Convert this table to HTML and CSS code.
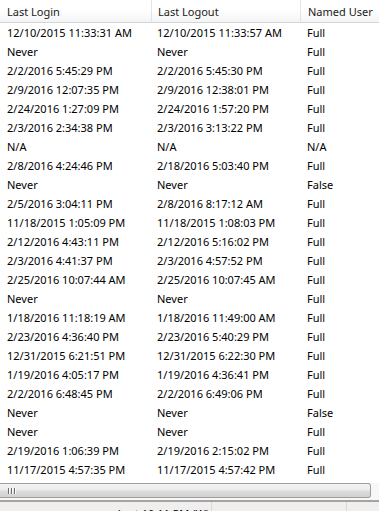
FILE: index.html
```html
<!DOCTYPE html>
<html>
<head>
<meta charset="utf-8">
<link rel="stylesheet" href="styles.css">
</head>
<body>
<div class="view">
  <div class="header">
    <div class="hcell c1">Last Login</div>
    <div class="hcell c2">Last Logout</div>
    <div class="hcell c3">Named User</div>
  </div>
  <div class="rows">
    <div class="row"><span class="c1">12/10/2015 11:33:31 AM</span><span class="c2">12/10/2015 11:33:57 AM</span><span class="c3">Full</span></div>
    <div class="row"><span class="c1">Never</span><span class="c2">Never</span><span class="c3">Full</span></div>
    <div class="row"><span class="c1">2/2/2016 5:45:29 PM</span><span class="c2">2/2/2016 5:45:30 PM</span><span class="c3">Full</span></div>
    <div class="row"><span class="c1">2/9/2016 12:07:35 PM</span><span class="c2">2/9/2016 12:38:01 PM</span><span class="c3">Full</span></div>
    <div class="row"><span class="c1">2/24/2016 1:27:09 PM</span><span class="c2">2/24/2016 1:57:20 PM</span><span class="c3">Full</span></div>
    <div class="row"><span class="c1">2/3/2016 2:34:38 PM</span><span class="c2">2/3/2016 3:13:22 PM</span><span class="c3">Full</span></div>
    <div class="row"><span class="c1">N/A</span><span class="c2">N/A</span><span class="c3">N/A</span></div>
    <div class="row"><span class="c1">2/8/2016 4:24:46 PM</span><span class="c2">2/18/2016 5:03:40 PM</span><span class="c3">Full</span></div>
    <div class="row"><span class="c1">Never</span><span class="c2">Never</span><span class="c3">False</span></div>
    <div class="row"><span class="c1">2/5/2016 3:04:11 PM</span><span class="c2">2/8/2016 8:17:12 AM</span><span class="c3">Full</span></div>
    <div class="row"><span class="c1">11/18/2015 1:05:09 PM</span><span class="c2">11/18/2015 1:08:03 PM</span><span class="c3">Full</span></div>
    <div class="row"><span class="c1">2/12/2016 4:43:11 PM</span><span class="c2">2/12/2016 5:16:02 PM</span><span class="c3">Full</span></div>
    <div class="row"><span class="c1">2/3/2016 4:41:37 PM</span><span class="c2">2/3/2016 4:57:52 PM</span><span class="c3">Full</span></div>
    <div class="row"><span class="c1">2/25/2016 10:07:44 AM</span><span class="c2">2/25/2016 10:07:45 AM</span><span class="c3">Full</span></div>
    <div class="row"><span class="c1">Never</span><span class="c2">Never</span><span class="c3">Full</span></div>
    <div class="row"><span class="c1">1/18/2016 11:18:19 AM</span><span class="c2">1/18/2016 11:49:00 AM</span><span class="c3">Full</span></div>
    <div class="row"><span class="c1">2/23/2016 4:36:40 PM</span><span class="c2">2/23/2016 5:40:29 PM</span><span class="c3">Full</span></div>
    <div class="row"><span class="c1">12/31/2015 6:21:51 PM</span><span class="c2">12/31/2015 6:22:30 PM</span><span class="c3">Full</span></div>
    <div class="row"><span class="c1">1/19/2016 4:05:17 PM</span><span class="c2">1/19/2016 4:36:41 PM</span><span class="c3">Full</span></div>
    <div class="row"><span class="c1">2/2/2016 6:48:45 PM</span><span class="c2">2/2/2016 6:49:06 PM</span><span class="c3">Full</span></div>
    <div class="row"><span class="c1">Never</span><span class="c2">Never</span><span class="c3">False</span></div>
    <div class="row"><span class="c1">Never</span><span class="c2">Never</span><span class="c3">Full</span></div>
    <div class="row"><span class="c1">2/19/2016 1:06:39 PM</span><span class="c2">2/19/2016 2:15:02 PM</span><span class="c3">Full</span></div>
    <div class="row"><span class="c1">11/17/2015 4:57:35 PM</span><span class="c2">11/17/2015 4:57:42 PM</span><span class="c3">Full</span></div>
  </div>
  <div class="hscroll">
    <div class="thumb"><span class="grip"></span><span class="grip"></span><span class="grip"></span></div>
  </div>
  <div class="status">
    <div class="scell s1">Last 10:11 PM (W)</div>
    <div class="scell s2"></div>
    <div class="scell s3"></div>
  </div>
</div>
</body>
</html>
```

FILE: styles.css
```css
html, body {
  margin: 0;
  padding: 0;
  background: #ffffff;
  overflow: hidden;
}
.view {
  width: 379px;
  height: 511px;
  display: flex;
  flex-direction: column;
  font-family: "Noto Sans", "Open Sans", sans-serif;
  font-size: 11px;
  color: #000000;
  overflow: hidden;
}
.header {
  display: grid;
  grid-template-columns: 152px 149px 1fr;
  height: 22px;
  border-bottom: 1px solid #d5d5d5;
  background: linear-gradient(to bottom, #ffffff 0%, #ffffff 45%, #f3f4f6 100%);
  color: #1a1a1a;
}
.hcell {
  line-height: 20px;
  padding-top: 2px;
  white-space: nowrap;
  overflow: hidden;
}
.hcell.c1, .hcell.c2 {
  border-right: 1px solid #e2e4e8;
}
.hcell.c1 { padding-left: 7px; }
.hcell.c2 { padding-left: 6px; }
.hcell.c3 { padding-left: 7px; }
.rows {
  display: flex;
  flex-direction: column;
  height: 460px;
}
.row {
  display: grid;
  grid-template-columns: 152px 149px 1fr;
  height: 19px;
  line-height: 19px;
  white-space: nowrap;
}
.row .c1 { padding-left: 7px; }
.row .c2 { padding-left: 5px; }
.row .c3 { padding-left: 6px; }
.hscroll {
  height: 17px;
  display: flex;
  align-items: flex-start;
  padding-right: 8px;
  background: #f7f7f7;
}
.thumb {
  flex: 1;
  height: 13px;
  border: 1px solid #9d9d9d;
  border-left: none;
  border-radius: 0 3px 3px 0;
  background: linear-gradient(to bottom, #f3f3f3 0%, #ececec 45%, #dcdcdc 55%, #d2d2d2 100%);
  display: flex;
  align-items: center;
  gap: 1px;
  padding-left: 8px;
}
.grip {
  width: 1px;
  height: 6px;
  background: #6e6e6e;
  border-right: 1px solid #fafafa;
}
.status {
  flex: 1;
  display: flex;
  border-top: 2px solid #a3a3a3;
  background: #f0efee;
  font-size: 11px;
  overflow: hidden;
}
.scell {
  white-space: nowrap;
  overflow: hidden;
  padding-top: 4px;
  line-height: 15px;
}
.s1 {
  width: 212px;
  text-align: right;
  padding-right: 2px;
  box-sizing: border-box;
  border-right: 1px solid #d9d8d6;
}
.s2 {
  width: 134px;
  border-right: 1px solid #d9d8d6;
}
.s3 { flex: 1; }
```
